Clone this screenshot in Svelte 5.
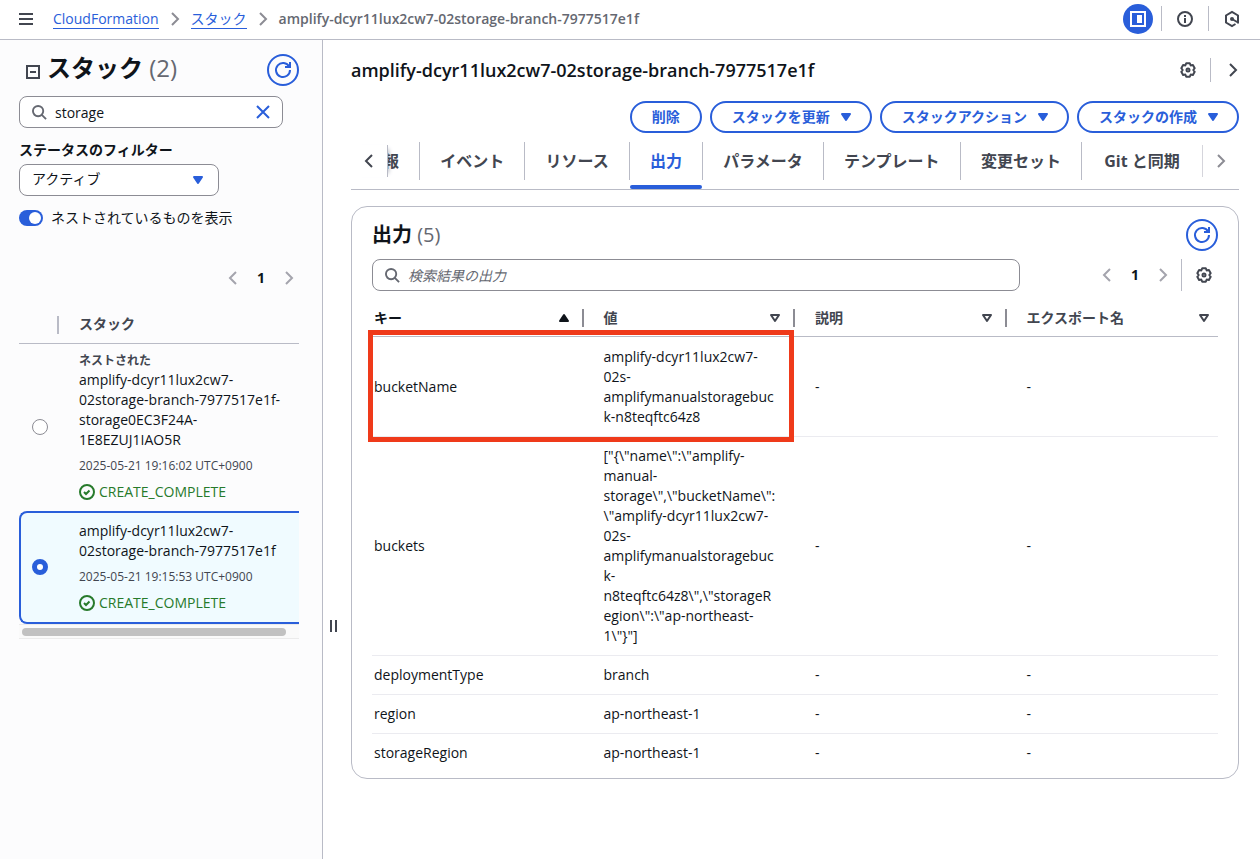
<script>
  let search = $state("storage");
  let showNested = $state(true);
  let selected = $state(1);

  const stacks = [
    {
      nested: true,
      name: ["amplify-dcyr11lux2cw7-", "02storage-branch-7977517e1f-", "storage0EC3F24A-", "1E8EZUJ1IAO5R"],
      created: "2025-05-21 19:16:02 UTC+0900",
      status: "CREATE_COMPLETE",
    },
    {
      nested: false,
      name: ["amplify-dcyr11lux2cw7-", "02storage-branch-7977517e1f"],
      created: "2025-05-21 19:15:53 UTC+0900",
      status: "CREATE_COMPLETE",
    },
  ];

  const actions = [
    { label: "削除", menu: false },
    { label: "スタックを更新", menu: true },
    { label: "スタックアクション", menu: true },
    { label: "スタックの作成", menu: true },
  ];

  const tabs = ["イベント", "リソース", "出力", "パラメータ", "テンプレート", "変更セット", "Git と同期"];
  let activeTab = $state("出力");

  const columns = ["キー", "値", "説明", "エクスポート名"];

  const outputs = [
    {
      key: "bucketName",
      value: ["amplify-dcyr11lux2cw7-", "02s-", "amplifymanualstoragebuc", "k-n8teqftc64z8"],
      marked: true,
    },
    {
      key: "buckets",
      value: [
        '["{\\"name\\":\\"amplify-',
        "manual-",
        'storage\\",\\"bucketName\\":',
        '\\"amplify-dcyr11lux2cw7-',
        "02s-",
        "amplifymanualstoragebuc",
        "k-",
        'n8teqftc64z8\\",\\"storageR',
        'egion\\":\\"ap-northeast-',
        '1\\"}"]',
      ],
    },
    { key: "deploymentType", value: ["branch"] },
    { key: "region", value: ["ap-northeast-1"] },
    { key: "storageRegion", value: ["ap-northeast-1"] },
  ];

  const icons = {
    menu: "M1 3h14M1 8h14M1 13h14",
    right: "m5 2 6 6-6 6",
    left: "m11 2-6 6 6 6",
    close: "m2 2 12 12M14 2 2 14",
    refresh: "M10 5h5V0M15 8a7 7 0 1 1-.8-3.2",
    search: "M11 11l4 4M12 6.5a5.5 5.5 0 1 1-11 0 5.5 5.5 0 0 1 11 0z",
    minus: "M2 2h12v12H2zM5 8h6",
    check: "M15 8A7 7 0 1 1 1 8a7 7 0 0 1 14 0zM5 8l2 2 3.5-3.5",
    gear: "M6.2 1.3h3.6l.9 2.1 2.2-.3 1.8 3.1L13.3 8l1.4 1.8-1.8 3.1-2.2-.3-.9 2.1H6.2l-.9-2.1-2.2.3-1.8-3.1L2.7 8 1.3 6.2l1.8-3.1 2.2.3zM9.5 8a1.5 1.5 0 1 1-3 0 1.5 1.5 0 0 1 3 0z",
    info: "M15 8A7 7 0 1 1 1 8a7 7 0 0 1 14 0zM8 7v5M8 4v2",
    hex: "M14 12.5v-8L8 1 2 4.5v7L8 15l3.5-2M8 8l6 3.5",
  };
</script>

{#snippet icon(name, cls = "")}
  <svg class="icon {cls}" viewBox="0 0 16 16" aria-hidden="true"><path d={icons[name]} /></svg>
{/snippet}

{#snippet caret(up = false)}
  <svg class="icon caret" viewBox="0 0 16 16" aria-hidden="true"><path d={up ? "M4 11h8L8 5z" : "M4 5h8l-4 6z"} /></svg>
{/snippet}

{#snippet pager()}
  <nav class="pager" aria-label="ページ">
    <button disabled aria-label="前のページ">{@render icon("left")}</button>
    <button class="page">1</button>
    <button disabled aria-label="次のページ">{@render icon("right")}</button>
  </nav>
{/snippet}

<div class="app">
  <header class="topbar">
    <button class="plain" aria-label="メニュー">{@render icon("menu")}</button>
    <nav class="crumbs">
      <a href="#home">CloudFormation</a>
      {@render icon("right", "muted")}
      <a href="#stacks">スタック</a>
      {@render icon("right", "muted")}
      <strong>amplify-dcyr11lux2cw7-02storage-branch-7977517e1f</strong>
    </nav>
    <div class="tools">
      <button class="panel-toggle" aria-label="分割パネル">
        <svg class="icon" viewBox="0 0 16 16" aria-hidden="true"><path d="M1 1h14v14H1z" /><path class="solid" d="M7 4h5v8H7z" /></svg>
      </button>
      <button class="plain" aria-label="情報">{@render icon("info")}</button>
      <button class="plain" aria-label="診断">
        <svg class="icon" viewBox="0 0 16 16" aria-hidden="true"><path d={icons.hex} /><circle class="dot" cx="8" cy="8" r="2" /></svg>
      </button>
    </div>
  </header>

  <div class="body">
    <aside class="sidebar">
      <div class="side-title">
        {@render icon("minus", "collapse")}
        <h2>スタック <span>(2)</span></h2>
        <button class="round" aria-label="更新">{@render icon("refresh")}</button>
      </div>
      <div class="search side-search">
        {@render icon("search", "lens")}
        <input type="text" aria-label="スタックを検索" bind:value={search} />
        <button class="plain blue" aria-label="クリア" onclick={() => (search = "")}>{@render icon("close")}</button>
      </div>
      <label class="filter-label" for="status">ステータスのフィルター</label>
      <div class="select">
        <select id="status"><option>アクティブ</option></select>
        {@render caret()}
      </div>
      <label class="toggle">
        <input type="checkbox" role="switch" bind:checked={showNested} />
        ネストされているものを表示
      </label>

      {@render pager()}

      <div class="stacks">
        <table>
          <thead>
            <tr><th class="pick"></th><th>スタック</th></tr>
          </thead>
          <tbody>
            {#each stacks as stack, i}
              <tr class:selected={selected === i}>
                <td class="pick">
                  <input type="radio" name="stack" value={i} bind:group={selected} aria-label={stack.name.join("")} />
                </td>
                <td>
                  {#if stack.nested}<b class="nested">ネストされた</b>{/if}
                  {#each stack.name as line}<div>{line}</div>{/each}
                  <time>{stack.created}</time>
                  <div class="status">{@render icon("check")}{stack.status}</div>
                </td>
              </tr>
            {/each}
          </tbody>
        </table>
        <div class="scrollbar"><span></span></div>
      </div>
    </aside>

    <button class="grip" aria-label="サイズ変更"><i></i><i></i></button>

    <main>
      <div class="title">
        <h1>amplify-dcyr11lux2cw7-02storage-branch-7977517e1f</h1>
        <button class="plain" aria-label="設定">{@render icon("gear", "rounded")}</button>
        <button class="plain next" aria-label="閉じる">{@render icon("right")}</button>
      </div>

      <div class="actions">
        {#each actions as action}
          <button>{action.label}{#if action.menu}{@render caret()}{/if}</button>
        {/each}
      </div>

      <div class="tabs">
        <button class="plain scroll start" aria-label="左へ">{@render icon("left")}</button>
        <div class="tablist" role="tablist">
          <button role="tab" class="cut" aria-label="スタックの情報"><span>報</span></button>
          {#each tabs as tab}
            <button role="tab" aria-selected={tab === activeTab} class:active={tab === activeTab} onclick={() => (activeTab = tab)}>
              <span>{tab}</span>
            </button>
          {/each}
        </div>
        <button class="plain scroll end" aria-label="右へ">{@render icon("right")}</button>
      </div>

      <section class="card">
        <div class="card-title">
          <h2>出力 <span>(5)</span></h2>
          <button class="round" aria-label="更新">{@render icon("refresh")}</button>
        </div>
        <div class="card-tools">
          <div class="search">
            {@render icon("search", "lens")}
            <input type="text" aria-label="出力を検索" placeholder="検索結果の出力" />
          </div>
          {@render pager()}
          <button class="plain prefs" aria-label="設定">{@render icon("gear", "rounded")}</button>
        </div>
        <table class="outputs">
          <thead>
            <tr>
              {#each columns as column, i}
                <th class:sorted={i === 0}>
                  <div class="th">{column}{@render caret(i === 0)}</div>
                </th>
              {/each}
            </tr>
          </thead>
          <tbody>
            {#each outputs as output}
              <tr>
                <td>
                  {output.key}
                  {#if output.marked}<div class="mark"></div>{/if}
                </td>
                <td>{#each output.value as line}<div>{line}</div>{/each}</td>
                <td>-</td>
                <td>-</td>
              </tr>
            {/each}
          </tbody>
        </table>
      </section>
    </main>
  </div>
</div>

<style>
  :global(body) {
    margin: 0;
  }

  .app {
    --blue: #295eda;
    --line: #b9bbc6;
    --dark: #424650;
    display: flex;
    flex-direction: column;
    min-height: 100vh;
    background: #fff;
    color: #0f141a;
    font: 14px/20px "Open Sans", "Noto Sans CJK JP", sans-serif;
  }

  .app * {
    box-sizing: border-box;
  }

  button,
  input,
  select {
    font: inherit;
    color: inherit;
  }

  button {
    padding: 0;
    border: 0;
    background: none;
  }

  h1,
  h2 {
    margin: 0;
  }

  a {
    color: var(--blue);
    text-decoration: none;
    border-bottom: 1px solid var(--blue);
    line-height: 19px;
  }

  .icon {
    display: block;
    flex: none;
    width: 16px;
    height: 16px;
    fill: none;
    stroke: currentColor;
    stroke-width: 2;
    overflow: visible;
  }

  .caret path {
    fill: currentColor;
    stroke-linejoin: round;
  }

  .rounded {
    stroke-linejoin: round;
  }

  .plain {
    display: flex;
    align-items: center;
    justify-content: center;
    color: var(--dark);
  }

  .topbar {
    display: flex;
    align-items: center;
    height: 40px;
    padding: 0 20px 2px 18px;
    border-bottom: 1px solid var(--line);
  }

  .crumbs {
    display: flex;
    align-items: center;
    gap: 8px;
    margin-left: 19px;
  }

  .crumbs strong {
    color: #656871;
    font-weight: 600;
  }

  .muted {
    color: #8c8c94;
  }

  .tools {
    display: flex;
    align-items: center;
    margin-left: auto;
  }

  .panel-toggle {
    display: flex;
    align-items: center;
    justify-content: center;
    width: 30px;
    height: 30px;
    margin-right: 8px;
    border-radius: 50%;
    background: var(--blue);
    color: #fff;
  }

  .solid,
  .dot {
    fill: currentColor;
    stroke: none;
  }

  .tools .plain {
    height: 25px;
    padding-left: 15px;
    margin-right: 15px;
    border-left: 1px solid var(--line);
  }

  .tools .plain:last-child {
    margin-right: 0;
  }

  .body {
    display: flex;
    flex: 1;
  }

  .sidebar {
    flex: none;
    width: 323px;
    padding: 14px 23px 20px 19px;
    border-right: 1px solid var(--line);
    background: #fcfcfd;
  }

  .side-title {
    display: flex;
    align-items: center;
    padding-left: 6px;
    margin-bottom: 10px;
  }

  .collapse {
    align-self: flex-end;
    margin-bottom: 6px;
    stroke: var(--dark);
  }

  .side-title h2 {
    flex: 1;
    margin-left: 6px;
    padding-bottom: 4px;
    font-size: 24px;
    line-height: 28px;
  }

  h2 span {
    color: #656871;
    font-weight: 500;
  }

  .round {
    display: flex;
    align-items: center;
    justify-content: center;
    width: 32px;
    height: 32px;
    border: 2px solid var(--blue);
    border-radius: 50%;
    color: var(--blue);
  }

  .search {
    display: flex;
    align-items: center;
    gap: 8px;
    height: 32px;
    padding: 0 11px 0 12px;
    border: 1px solid #8c8c94;
    border-radius: 8px;
    background: #fff;
  }

  .lens {
    width: 15px;
    height: 15px;
    color: #656871;
  }

  .search input {
    flex: 1;
    min-width: 0;
    padding: 2px 0 0;
    border: 0;
    outline: 0;
    background: none;
  }

  .search input::placeholder {
    color: #656871;
    font-style: italic;
    opacity: 1;
  }

  .side-search {
    margin-right: 16px;
  }

  .blue {
    color: var(--blue);
  }

  .filter-label {
    display: block;
    margin: 12px 0 4px;
    font-weight: 700;
  }

  .select {
    position: relative;
    width: 200px;
  }

  .select select {
    display: block;
    width: 100%;
    height: 32px;
    padding: 0 12px 2px;
    border: 1px solid #8c8c94;
    border-radius: 8px;
    background: #fff;
    appearance: none;
  }

  .select .icon {
    position: absolute;
    top: 8px;
    right: 13px;
    color: var(--blue);
    pointer-events: none;
  }

  .toggle {
    display: flex;
    align-items: center;
    gap: 8px;
    margin-top: 12px;
  }

  .toggle input {
    display: flex;
    width: 24px;
    height: 16px;
    margin: 0;
    padding: 2px;
    border-radius: 8px;
    background: #8c8c94;
    appearance: none;
  }

  .toggle input::before {
    content: "";
    width: 12px;
    height: 12px;
    border-radius: 50%;
    background: #fff;
  }

  .toggle input:checked {
    justify-content: flex-end;
    background: var(--blue);
  }

  .pager {
    display: flex;
    align-items: center;
  }

  .pager button {
    display: flex;
    justify-content: center;
    width: 28px;
    color: #a4a4ad;
  }

  .pager .page {
    color: #0f141a;
    font-weight: 700;
  }

  .sidebar .pager {
    justify-content: flex-end;
    margin: 40px -4px 20px 0;
  }

  table {
    width: 100%;
    border-collapse: separate;
    border-spacing: 0;
  }

  th,
  td {
    padding: 0;
    text-align: left;
  }

  th {
    color: var(--dark);
    font-weight: 700;
    border-bottom: 1px solid var(--line);
  }

  .stacks th {
    height: 36px;
    padding-bottom: 3px;
  }

  .stacks th.pick {
    background: linear-gradient(var(--line), var(--line)) no-repeat 38px 8px / 2px 18px;
  }

  .pick {
    width: 60px;
  }

  .stacks td {
    padding: 8px 0 9px;
  }

  .stacks .selected td {
    border: solid var(--blue);
    border-width: 2px 0;
    background: #f0fbff;
  }

  .stacks .selected td:first-child {
    border-left-width: 2px;
    border-radius: 8px 0 0 8px;
  }

  .stacks td.pick input {
    display: block;
    width: 16px;
    height: 16px;
    margin: 0 0 0 13px;
    border: 1px solid #8c8c94;
    border-radius: 50%;
    background: #fff;
    appearance: none;
  }

  .stacks .selected td.pick input {
    margin-left: 11px;
    border: 5px solid var(--blue);
  }

  .nested {
    display: block;
    font-size: 12px;
    line-height: 18px;
    color: var(--dark);
  }

  time {
    display: block;
    margin: 6px 0;
    font-size: 12px;
    font-weight: 500;
    color: var(--dark);
  }

  .status {
    display: flex;
    align-items: center;
    gap: 4px;
    color: #277a2b;
  }

  .scrollbar {
    height: 15px;
    padding: 3px;
    border: solid #ebebeb;
    border-width: 1px 0;
    background: #fafafa;
  }

  .scrollbar span {
    display: block;
    width: 264px;
    height: 8px;
    border-radius: 4px;
    background: #c1c1c1;
  }

  .grip {
    display: flex;
    gap: 3px;
    align-self: flex-start;
    margin: 580px 14px 0 7px;
  }

  .grip i {
    width: 2px;
    height: 12px;
    background: var(--dark);
  }

  main {
    flex: 1;
    min-width: 0;
    padding: 18px 21px 20px 0;
  }

  .title {
    display: flex;
    align-items: center;
  }

  h1 {
    flex: 1;
    font-size: 18px;
    line-height: 22px;
    font-weight: 600;
  }

  .title .next {
    height: 24px;
    padding-left: 14px;
    margin: 0 -2px 0 14px;
    border-left: 1px solid var(--line);
  }

  .actions {
    display: flex;
    justify-content: flex-end;
    gap: 8px;
    margin-top: 19px;
  }

  .actions button {
    display: flex;
    align-items: center;
    gap: 8px;
    height: 32px;
    padding: 0 20px;
    border: 2px solid var(--blue);
    border-radius: 16px;
    color: var(--blue);
    font-weight: 700;
  }

  .actions .icon {
    margin-right: -4px;
  }

  .tabs {
    display: flex;
    height: 57px;
    border-bottom: 1px solid var(--line);
  }

  .scroll {
    flex: none;
    width: 37px;
    height: 32px;
    margin-top: 12px;
  }

  .scroll.start {
    border-right: 1px solid var(--line);
    box-shadow: 5px 0 4px -4px #b9bbc6;
  }

  .scroll.end {
    border-left: 1px solid #d5d5dc;
    color: #8c8c94;
  }

  .tablist {
    display: flex;
    flex: 1;
    min-width: 0;
    overflow: hidden;
  }

  .tablist button {
    display: flex;
    flex: 1 0 auto;
    flex-direction: column;
    padding-top: 9px;
    color: var(--dark);
    font-size: 16px;
    font-weight: 700;
    white-space: nowrap;
  }

  .tablist span {
    width: 100%;
    padding: 0 20px;
    border-right: 1px solid var(--line);
    line-height: 38px;
  }

  .tablist button:last-child span {
    padding: 0 22px;
    border-right: 0;
  }

  .tablist .cut {
    flex: none;
    width: 32px;
  }

  /* scrolled tab: only the right part of its label shows */
  .tablist .cut span {
    display: flex;
    justify-content: flex-end;
    padding-left: 0;
  }

  .tablist .active {
    color: var(--blue);
  }

  .tablist .active::after {
    content: "";
    width: calc(100% - 1px);
    height: 4px;
    margin-top: auto;
    border-radius: 2px;
    background: var(--blue);
  }

  .card {
    margin-top: 16px;
    padding: 12px 20px 5px;
    border: 1px solid var(--line);
    border-radius: 16px;
  }

  .card-title {
    display: flex;
    align-items: center;
    justify-content: space-between;
  }

  .card h2 {
    font-size: 20px;
    line-height: 24px;
  }

  .card-tools {
    display: flex;
    align-items: center;
    margin-top: 8px;
  }

  .card-tools .search {
    flex: 1;
    max-width: 648px;
  }

  .card-tools .pager {
    margin-left: auto;
  }

  .prefs {
    height: 32px;
    margin-left: 4px;
    padding: 0 6px 0 14px;
    border-left: 1px solid var(--line);
  }

  .outputs {
    position: relative;
    margin-top: 8px;
    table-layout: fixed;
  }

  .outputs th {
    height: 38px;
  }

  .outputs th:first-child {
    width: 25%;
  }

  .th {
    display: flex;
    align-items: center;
    justify-content: space-between;
    height: 18px;
    padding: 0 10px 0 20px;
    border-right: 2px solid #8c8c94;
  }

  .th .icon path {
    fill: none;
  }

  .sorted {
    color: #0f141a;
  }

  .sorted .icon path {
    fill: currentColor;
  }

  th:first-child .th {
    padding-left: 2px;
  }

  th:last-child .th {
    padding-right: 6px;
    border-right: 0;
  }

  .outputs td {
    padding: 9px 0 9px 20px;
    border-bottom: 1px solid #ebebf0;
  }

  .outputs tr:first-child td {
    padding-top: 10px;
  }

  .outputs td:first-child {
    padding-left: 2px;
  }

  .outputs tr:last-child td {
    padding-bottom: 10px;
    border-bottom: 0;
  }

  /* frame around the first output's key and value */
  .mark {
    position: absolute;
    top: 31px;
    left: -4px;
    width: calc(50% + 3px);
    height: 112px;
    border: 5px solid #ef3a1a;
  }
</style>
